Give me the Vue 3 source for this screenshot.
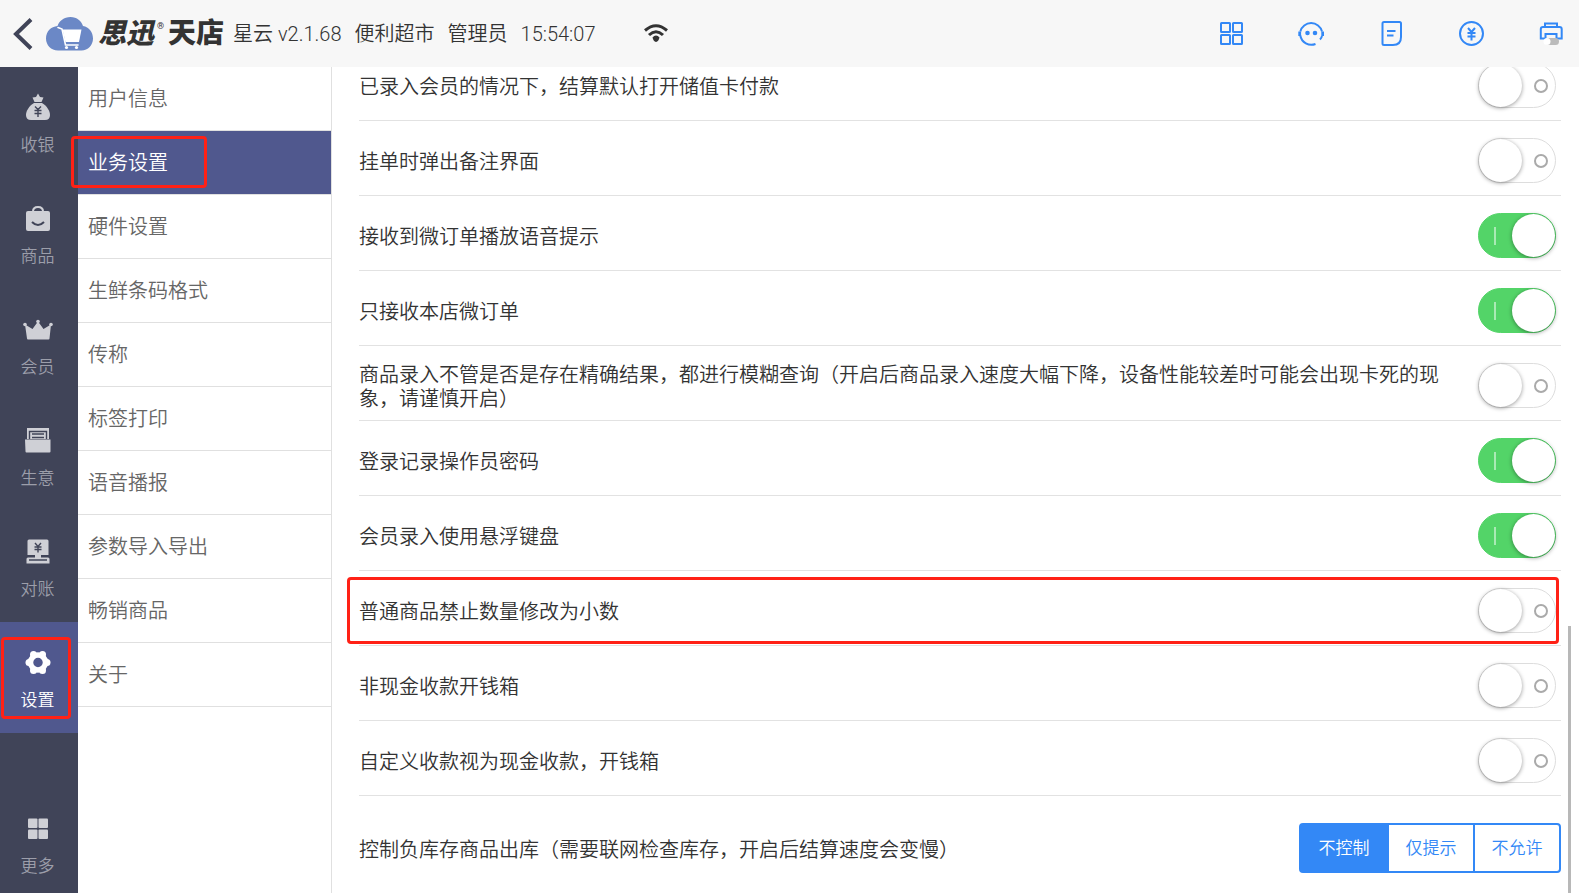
<template>
  <div class="page">
    <!-- 顶部栏 -->
    <header class="topbar">
      <button class="icon-btn back" aria-label="返回">
        <svg width="20" height="32" viewBox="0 0 20 32">
          <path d="M18 1.500 L3 16 L18 30.500" fill="none" stroke="#404458" stroke-width="4" />
        </svg>
      </button>
      <svg class="cloud" width="48" height="34" viewBox="0 0 48 34">
        <path
          d="M12 33.500C5 33.500 0 28 0 21.500C0 14.500 5 9.500 11.500 9C13 4 18 0 24.500 0C31 0 35.500 4 37 9C43 10 47 15 47 21.500C47 28 42 33.500 35.500 33.500Z"
          fill="#6b88c6"
        />
        <path d="M12 10.500 L16 12 L19.500 28 H32" fill="none" stroke="#fff" stroke-width="1.600" stroke-linecap="round" />
        <path d="M16.500 12.500 H35.500 L33 25 H19.500Z" fill="#fff" />
        <circle cx="20.500" cy="30.500" r="1.600" fill="#fff" />
        <circle cx="30.500" cy="30.500" r="1.600" fill="#fff" />
      </svg>
      <div class="brand"><i>思迅</i><sup>®</sup><b>天店</b></div>
      <div class="info">
        <span>星云 v2.1.68</span>
        <span>便利超市</span>
        <span>管理员</span>
        <span>15:54:07</span>
      </div>
      <svg class="wifi" width="24" height="20" viewBox="0 0 24 20">
        <path d="M1 6.500 Q12 -3 23 6.500" fill="none" stroke="#333" stroke-width="3" />
        <path d="M5 11 Q12 4.500 19 11" fill="none" stroke="#333" stroke-width="3" />
        <path d="M12 11.500 Q14 11.500 15.500 13.500 Q14.500 17.500 12 18 Q9.500 17.500 8.500 13.500 Q10 11.500 12 11.500Z" fill="#333" />
      </svg>
      <nav class="tools">
        <button class="icon-btn" aria-label="应用">
          <svg width="24" height="26" viewBox="0 0 24 26" class="line">
            <rect x="2" y="2" width="9" height="9" rx="0.500" />
            <rect x="14" y="2" width="9" height="9" rx="0.500" />
            <rect x="2" y="14" width="9" height="9" rx="0.500" />
            <rect x="14" y="14" width="9" height="9" rx="0.500" />
          </svg>
        </button>
        <button class="icon-btn" aria-label="客服">
          <svg width="26" height="26" viewBox="0 0 26 26" class="line">
            <path d="M2.300 10.500 A11.200 11.200 0 0 1 24 10.500 M2.300 14.500 A11.200 11.200 0 0 0 17.500 23" />
            <path d="M1.700 10.500 V15 M24.700 10.500 V15" stroke-width="2.800" />
            <path d="M24 15 Q23.500 17 22 18.500" />
            <circle cx="9.500" cy="12" r="1.300" fill="#3388f6" />
            <circle cx="17" cy="12" r="1.300" fill="#3388f6" />
          </svg>
        </button>
        <button class="icon-btn" aria-label="单据">
          <svg width="24" height="26" viewBox="0 0 24 26" class="line">
            <path d="M5 1 H20.500 Q22 1 22 2.500 V16 Q22 24 14 24 H5 Q3.500 24 3.500 22.500 V2.500 Q3.500 1 5 1Z" />
            <path d="M8 10 H16.500 M8 14.500 H14.500" />
          </svg>
        </button>
        <button class="icon-btn" aria-label="收款">
          <svg width="26" height="26" viewBox="0 0 26 26" class="line">
            <circle cx="13.500" cy="12.500" r="11.500" />
            <path d="M10 7 L13.500 11 L17 7 M9.500 12 H17.500 M9.500 15.500 H17.500 M13.500 11 V19.500" />
          </svg>
        </button>
        <button class="icon-btn" aria-label="打印">
          <svg width="24" height="26" viewBox="0 0 24 26" class="line">
            <path d="M6 6 V2.500 H18 V6" />
            <path d="M6.500 17.500 H1.800 V8 Q1.800 6 4 6 H20.500 Q22.700 6 22.700 8 V17.500 H17.500" />
            <path d="M6.500 19 V13 H17.500 V19" />
            <rect x="6" y="17" width="14" height="7" rx="3.500" fill="#bbb" stroke="none" />
            <circle cx="8" cy="20.500" r="3.500" fill="#fff" stroke="none" />
          </svg>
        </button>
      </nav>
    </header>

    <div class="body">
      <!-- 主导航 -->
      <nav class="rail">
        <button
          v-for="item in railItems"
          :key="item.id"
          class="rail-item"
          :class="{ active: item.id === activeRail, more: item.id === 'more' }"
          @click="activeRail = item.id"
        >
          <svg width="30" height="28" viewBox="0 0 30 28" fill="currentColor">
            <template v-if="item.id === 'cash'">
              <path d="M9.500 4.500 L13 4 L15 0.500 L17 4 L20.500 4.500 L18.500 9 H11.500Z" />
              <path d="M11 10 H19 C24 13 27 18 27 22 Q27 27 22 27 H8 Q3 27 3 22 C3 18 6 13 11 10Z" />
              <path class="cut" d="M12 13.500 L15 16.500 L18 13.500 M11.500 17.500 H18.500 M11.500 20.500 H18.500 M15 17 V24" />
            </template>
            <template v-else-if="item.id === 'goods'">
              <path d="M5 7 H25 Q27 7 27 9 V25 Q27 27 25 27 H5 Q3 27 3 25 V9 Q3 7 5 7Z" />
              <path d="M10 7.500 Q10 3 15 3 Q20 3 20 7.500" fill="none" stroke="currentColor" stroke-width="2" />
              <path class="cut smile" d="M9 18 Q15 24 21 18" />
            </template>
            <template v-else-if="item.id === 'member'">
              <path d="M2 9.500 L9.500 14 L15 6.500 L20.500 14 L28 9.500 L26.500 23.500 Q26.500 24.500 25.500 24.500 H5 Q4 24.500 4 23.500Z" />
              <circle cx="2" cy="9.500" r="1.800" />
              <circle cx="15" cy="6.500" r="1.800" />
              <circle cx="28" cy="9.500" r="1.800" />
            </template>
            <template v-else-if="item.id === 'trade'">
              <path d="M4 2 H26 V13 H4Z" />
              <path class="cut" d="M6.500 13 V5.500 H23.500 V13 M9 8 H21 M9 11.500 H21" />
              <path d="M2 13.500 H27.500 V25.500 Q27.500 26.500 26.500 26.500 H3.500 Q2.500 26.500 2.500 25.500Z" />
            </template>
            <template v-else-if="item.id === 'check'">
              <path d="M6 2.500 H24 Q25.500 2.500 25.500 4 V18 H4.500 V4 Q4.500 2.500 6 2.500Z" />
              <path d="M12 17 H18 V21 H12Z M5 20.500 H25 Q26.500 20.500 26.500 22 V26.500 H3.500 V22 Q3.500 20.500 5 20.500Z" />
              <path class="cut" d="M12 6 L15 9.500 L18 6 M11.500 10 H18.500 M11.500 12.500 H18.500 M15 10 V15.500 M6 23 H24" />
            </template>
            <template v-else-if="item.id === 'setting'">
              <circle cx="15" cy="14.500" r="7.500" fill="none" stroke="currentColor" stroke-width="5.500" />
              <circle cx="6" cy="14.500" r="3.500" />
              <circle cx="24" cy="14.500" r="3.500" />
              <circle cx="10.500" cy="6.500" r="3.500" />
              <circle cx="19.500" cy="6.500" r="3.500" />
              <circle cx="10.500" cy="22.500" r="3.500" />
              <circle cx="19.500" cy="22.500" r="3.500" />
            </template>
            <template v-else>
              <rect x="5" y="4.500" width="9.500" height="9.500" rx="1" />
              <rect x="15.500" y="4.500" width="9.500" height="9.500" rx="1" />
              <rect x="5" y="15.500" width="9.500" height="9.500" rx="1" />
              <rect x="15.500" y="15.500" width="9.500" height="9.500" rx="1" />
            </template>
          </svg>
          <span>{{ item.label }}</span>
          <i v-if="item.id === 'setting'" class="mark mark-rail"></i>
        </button>
      </nav>

      <!-- 设置分类 -->
      <nav class="menu">
        <button
          v-for="name in menus"
          :key="name"
          class="menu-item"
          :class="{ active: name === activeMenu }"
          @click="activeMenu = name"
        >
          {{ name }}
          <i v-if="name === '业务设置'" class="mark mark-menu"></i>
        </button>
      </nav>

      <!-- 设置项 -->
      <main class="content">
        <div class="list">
          <div v-for="(s, i) in settings" :key="s.label" class="row">
            <label :for="'s' + i">{{ s.label }}</label>
            <input :id="'s' + i" v-model="s.on" type="checkbox" class="switch" />
            <i v-if="s.marked" class="mark mark-row"></i>
          </div>
          <div class="row last">
            <span id="stock">控制负库存商品出库（需要联网检查库存，开启后结算速度会变慢）</span>
            <div class="segment" role="group" aria-labelledby="stock">
              <button
                v-for="o in stockOptions"
                :key="o"
                :class="{ on: o === stock }"
                :aria-pressed="o === stock"
                @click="stock = o"
              >
                {{ o }}
              </button>
            </div>
          </div>
        </div>
        <div class="scrollbar"></div>
      </main>
    </div>
  </div>
</template>

<script setup>
import { ref } from "vue";

const activeRail = ref("setting");
const railItems = [
  { id: "cash", label: "收银" },
  { id: "goods", label: "商品" },
  { id: "member", label: "会员" },
  { id: "trade", label: "生意" },
  { id: "check", label: "对账" },
  { id: "setting", label: "设置" },
  { id: "more", label: "更多" },
];

const activeMenu = ref("业务设置");
const menus = [
  "用户信息",
  "业务设置",
  "硬件设置",
  "生鲜条码格式",
  "传称",
  "标签打印",
  "语音播报",
  "参数导入导出",
  "畅销商品",
  "关于",
];

const settings = ref([
  { label: "已录入会员的情况下，结算默认打开储值卡付款", on: false },
  { label: "挂单时弹出备注界面", on: false },
  { label: "接收到微订单播放语音提示", on: true },
  { label: "只接收本店微订单", on: true },
  {
    label:
      "商品录入不管是否是存在精确结果，都进行模糊查询（开启后商品录入速度大幅下降，设备性能较差时可能会出现卡死的现象，请谨慎开启）",
    on: false,
  },
  { label: "登录记录操作员密码", on: true },
  { label: "会员录入使用悬浮键盘", on: true },
  { label: "普通商品禁止数量修改为小数", on: false, marked: true },
  { label: "非现金收款开钱箱", on: false },
  { label: "自定义收款视为现金收款，开钱箱", on: false },
]);

const stock = ref("不控制");
const stockOptions = ["不控制", "仅提示", "不允许"];
</script>

<style>
body {
  margin: 0;
  overflow: hidden;
}
</style>

<style scoped>
.page {
  height: 100vh;
  display: flex;
  flex-direction: column;
  background: #fff;
  color: #333;
  font-family: Roboto, "Noto Sans CJK SC", sans-serif;
  font-size: 20px;
  font-weight: 350;
  line-height: 24px;
}
button {
  border: none;
  padding: 0;
  background: none;
  font: inherit;
  color: inherit;
  cursor: pointer;
}

/* 顶部栏 */
.topbar {
  flex: none;
  height: 67px;
  display: flex;
  align-items: center;
  padding: 0 16px 0 13px;
  background: #f7f7f7;
}
.icon-btn {
  display: flex;
  align-items: center;
  justify-content: center;
}
.cloud {
  margin-left: 13px;
}
.brand {
  display: flex;
  align-items: center;
  margin-left: 4px;
  font-size: 28px;
  font-weight: 900;
  line-height: 32px;
  white-space: nowrap;
}
.brand sup {
  align-self: flex-start;
  margin: 0 4px 0 3px;
  font-size: 9px;
  font-weight: 400;
  line-height: 16px;
}
.brand b {
  font-weight: 900;
}
.info {
  display: flex;
  gap: 13px;
  margin-left: 9px;
  white-space: nowrap;
}
.wifi {
  margin-left: 48px;
}
.tools {
  display: flex;
  gap: 56px;
  margin-left: auto;
}
.tools .icon-btn {
  width: 24px;
}
.tools svg {
  flex: none;
}
.line {
  fill: none;
  stroke: #3388f6;
  stroke-width: 2;
}

/* 主导航 */
.body {
  flex: 1;
  min-height: 0;
  display: flex;
}
.rail {
  flex: none;
  width: 78px;
  display: flex;
  flex-direction: column;
  background: #404458;
}
.rail-item {
  position: relative;
  height: 111px;
  display: flex;
  flex-direction: column;
  align-items: center;
  gap: 12px;
  padding-top: 26px;
  padding-right: 3px;
  box-sizing: border-box;
  color: #cfd0d6;
  font-size: 17px;
}
.rail-item span {
  color: #9c9eaa;
}
.rail-item .cut {
  fill: none;
  stroke: #404458;
  stroke-width: 1.4;
}
.rail-item .smile {
  stroke-width: 2;
}
.rail-item.active {
  background: #50588e;
  color: #fff;
}
.rail-item.active span {
  color: #fff;
}
.rail-item.more {
  height: 105px;
  margin-top: auto;
}

/* 设置分类 */
.menu {
  flex: none;
  width: 254px;
  box-sizing: border-box;
  display: flex;
  flex-direction: column;
  border-right: 1px solid #e0e0e0;
}
.menu-item {
  position: relative;
  height: 64px;
  padding: 0 10px;
  border-bottom: 1px solid #e0e0e0;
  color: #666;
  text-align: left;
}
.menu-item.active {
  background: #50588e;
  color: #fff;
}

/* 设置项 */
.content {
  position: relative;
  flex: 1;
  min-width: 0;
  overflow: hidden;
  padding: 0 18px 0 27px;
}
.list {
  margin-top: -21px;
}
.row {
  position: relative;
  min-height: 75px;
  box-sizing: border-box;
  display: flex;
  align-items: center;
  justify-content: space-between;
  gap: 30px;
  padding: 4px 5px 0 0;
  border-bottom: 1px solid #e2e2e2;
}
.row label,
.row span {
  padding-top: 4px;
}
.row.last {
  padding: 27px 0;
  border-bottom: none;
}
.switch {
  appearance: none;
  position: relative;
  flex: none;
  width: 78px;
  height: 45px;
  margin: 0;
  border: 1px solid #ddd;
  border-radius: 23px;
  background: #fff;
  cursor: pointer;
}
.switch::before {
  content: "";
  position: absolute;
  top: 0;
  left: 0;
  width: 43px;
  height: 43px;
  border-radius: 50%;
  background: #fff;
  box-shadow: 0 1px 4px rgba(0, 0, 0, 0.4);
}
.switch::after {
  content: "";
  position: absolute;
  top: 15px;
  right: 7px;
  width: 10px;
  height: 10px;
  border: 2px solid #aaa;
  border-radius: 50%;
}
.switch:checked {
  border-color: #53d468;
  background: #53d468;
}
.switch:checked::before {
  left: 33px;
}
.switch:checked::after {
  top: 13px;
  left: 15px;
  width: 2px;
  height: 18px;
  border: none;
  border-radius: 0;
  background: #a9eab4;
}
.segment {
  flex: none;
  display: flex;
  height: 50px;
  box-sizing: border-box;
  border: 2px solid #3388f6;
  border-radius: 4px;
}
.segment button {
  width: 86px;
  border-left: 2px solid #3388f6;
  color: #3388f6;
  font-size: 17px;
}
.segment button:first-child {
  border-left: none;
}
.segment .on {
  background: #3388f6;
  color: #fff;
}
.scrollbar {
  position: absolute;
  top: 559px;
  right: 8px;
  bottom: 0;
  width: 3px;
  background: #b8b8b8;
}

/* 红色标注框 */
.mark {
  position: absolute;
  z-index: 2;
  box-sizing: border-box;
  border: 3px solid #ff2116;
  border-radius: 4px;
  pointer-events: none;
}
.mark-rail {
  inset: 15px 7px 14px 1px;
}
.mark-menu {
  inset: 5px 124px 6px -7px;
}
.mark-row {
  inset: 6px 2px 1px -12px;
}
</style>
